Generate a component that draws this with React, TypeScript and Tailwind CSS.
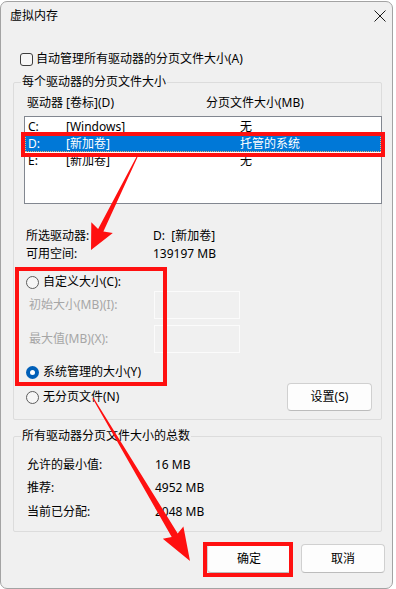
import type { ReactNode } from 'react';

function arrowPoints(x1: number, y1: number, x2: number, y2: number, head: number, shaft: number, wing: number) {
  const dx = x2 - x1;
  const dy = y2 - y1;
  const len = Math.hypot(dx, dy);
  const ux = dx / len;
  const uy = dy / len;
  const nx = -uy;
  const ny = ux;
  const pts = [
    [0, -0.6],
    [len - head, -shaft],
    [len - head - 3, -wing],
    [len, 0],
    [len - head - 3, wing],
    [len - head, shaft],
    [0, 0.6],
  ];
  return pts.map(([a, b]) => `${(x1 + ux * a + nx * b).toFixed(1)},${(y1 + uy * a + ny * b).toFixed(1)}`).join(' ');
}

function Radio({ checked, children }: { checked?: boolean; children: ReactNode }) {
  return (
    <div className="flex h-[16px] items-center">
      {checked ? (
        <span className="flex h-[13px] w-[13px] items-center justify-center rounded-full bg-[#005fb8]">
          <span className="h-[5px] w-[5px] rounded-full bg-white" />
        </span>
      ) : (
        <span className="h-[13px] w-[13px] rounded-full border border-[#5d5d5d] bg-[#f6f6f6]" />
      )}
      <span className="ml-[4px]">{children}</span>
    </div>
  );
}

function Button({ children, className = '' }: { children: ReactNode; className?: string }) {
  return (
    <button className={`flex h-[28px] items-center justify-center rounded-[4px] border border-[#d0d0d0] border-b-[#bcbcbc] bg-[#fdfdfd] text-black ${className}`}>
      {children}
    </button>
  );
}

function DriveRow({ drive, label, size, selected }: { drive: string; label: string; size: string; selected?: boolean }) {
  return (
    <div
      className={
        selected
          ? 'flex h-[17px] items-center border border-dotted border-[#e9b277] bg-[#0078d7] pl-[2px] text-white'
          : 'flex h-[17px] items-center pl-[3px]'
      }
    >
      <span className="w-[38px]">{drive}</span>
      <span className="w-[174px]">{label}</span>
      <span>{size}</span>
    </div>
  );
}

export default function App() {
  return (
    <div className="relative h-[589px] w-[396px] overflow-hidden bg-white font-['Noto_Sans','Noto_Sans_CJK_SC',sans-serif] text-[12px] leading-[16px] text-black">
      <div className="mt-[1px] flex h-[588px] w-[393px] flex-col rounded-[7px] border border-[#a3a3a3] bg-[#f0f0f0]">
        {/* title bar */}
        <div className="flex h-[27px] items-center justify-between pl-[9px] pr-[6px]">
          <span>虚拟内存</span>
          <svg width="12" height="12" viewBox="0 0 12 12" className="mt-[1px]">
            <path d="M0.5 0.5 L11.5 11.5 M11.5 0.5 L0.5 11.5" stroke="#1a1a1a" strokeWidth="1" />
          </svg>
        </div>

        <div className="mt-[22px] flex h-[16px] items-center pl-[19px]">
          <span className="h-[13px] w-[13px] rounded-[3px] border border-[#3c3c3c] bg-[#f6f6f6]" />
          <span className="ml-[3px]">自动管理所有驱动器的分页文件大小(A)</span>
        </div>

        <fieldset className="ml-[12px] mt-[7px] w-[369px] min-w-0 rounded-[2px] border border-[#dcdcdc] pb-[8px] pl-[8px]">
          <legend className="-ml-[1px] px-[1px] leading-[16px]">每个驱动器的分页文件大小</legend>

          <div className="mt-[5px] flex h-[16px] items-center pl-[5px]">
            <span className="w-[179px]">驱动器 [卷标](D)</span>
            <span>分页文件大小(MB)</span>
          </div>

          <div className="ml-[2px] mt-[5px] h-[88px] w-[358px] border border-[#828790] bg-white pt-[1px]">
            <DriveRow drive="C:" label="[Windows]" size="无" />
            <DriveRow drive="D:" label="[新加卷]" size="托管的系统" selected />
            <DriveRow drive="E:" label="[新加卷]" size="无" />
          </div>

          <div className="mt-[24px] flex h-[16px] items-center pl-[4px]">
            <span className="w-[127px]">所选驱动器:</span>
            <span>D:&nbsp;&nbsp;[新加卷]</span>
          </div>
          <div className="mt-[2px] flex h-[16px] items-center pl-[4px]">
            <span className="w-[127px]">可用空间:</span>
            <span>139197 MB</span>
          </div>

          <div className="mt-[12px] pl-[4px]">
            <Radio>自定义大小(C):</Radio>
          </div>

          <div className="mt-[1px] flex h-[28px] items-center pl-[7px] text-[#a6a6a6]">
            <span className="w-[125px]">初始大小(MB)(I):</span>
            <span className="h-[28px] w-[86px] border border-[#fbfbfb]" />
          </div>
          <div className="mt-[6px] flex h-[28px] items-center pl-[7px] text-[#a6a6a6]">
            <span className="w-[125px]">最大值(MB)(X):</span>
            <span className="h-[28px] w-[86px] border border-[#fbfbfb]" />
          </div>

          <div className="mt-[11px] pl-[4px]">
            <Radio checked>系统管理的大小(Y)</Radio>
          </div>

          <div className="mt-[3px] flex h-[28px] w-[350px] items-center justify-between pl-[4px]">
            <Radio>无分页文件(N)</Radio>
            <Button className="w-[85px]">设置(S)</Button>
          </div>
        </fieldset>

        <fieldset className="ml-[12px] mt-[8px] w-[369px] min-w-0 rounded-[2px] border border-[#dcdcdc] pb-[11px] pl-[8px]">
          <legend className="-ml-[1px] px-[1px] leading-[16px]">所有驱动器分页文件大小的总数</legend>
          <div className="mt-[13px] flex h-[16px] items-center pl-[5px]">
            <span className="w-[128px]">允许的最小值:</span>
            <span>16 MB</span>
          </div>
          <div className="mt-[7px] flex h-[16px] items-center pl-[5px]">
            <span className="w-[128px]">推荐:</span>
            <span>4952 MB</span>
          </div>
          <div className="mt-[8px] flex h-[16px] items-center pl-[5px]">
            <span className="w-[128px]">当前已分配:</span>
            <span>2048 MB</span>
          </div>
        </fieldset>

        <div className="mt-[12px] flex gap-[10px] pl-[206px]">
          <Button className="h-[29px] w-[84px]">确定</Button>
          <Button className="h-[29px] w-[84px]">取消</Button>
        </div>
      </div>

      {/* red annotations */}
      <svg className="pointer-events-none absolute left-0 top-0" width="396" height="589">
        <rect x="23" y="134" width="360" height="21" fill="none" stroke="#ff1010" strokeWidth="4" />
        <rect x="17" y="269" width="148" height="115" fill="none" stroke="#ff1010" strokeWidth="4" />
        <rect x="205" y="544" width="86" height="31" fill="none" stroke="#ff1010" strokeWidth="4" />
        <polygon points={arrowPoints(137, 157, 91, 250, 22, 3, 12)} fill="#ff1010" />
        <polygon points={arrowPoints(93, 398, 190, 561, 30, 3.5, 12)} fill="#ff1010" />
      </svg>
    </div>
  );
}
